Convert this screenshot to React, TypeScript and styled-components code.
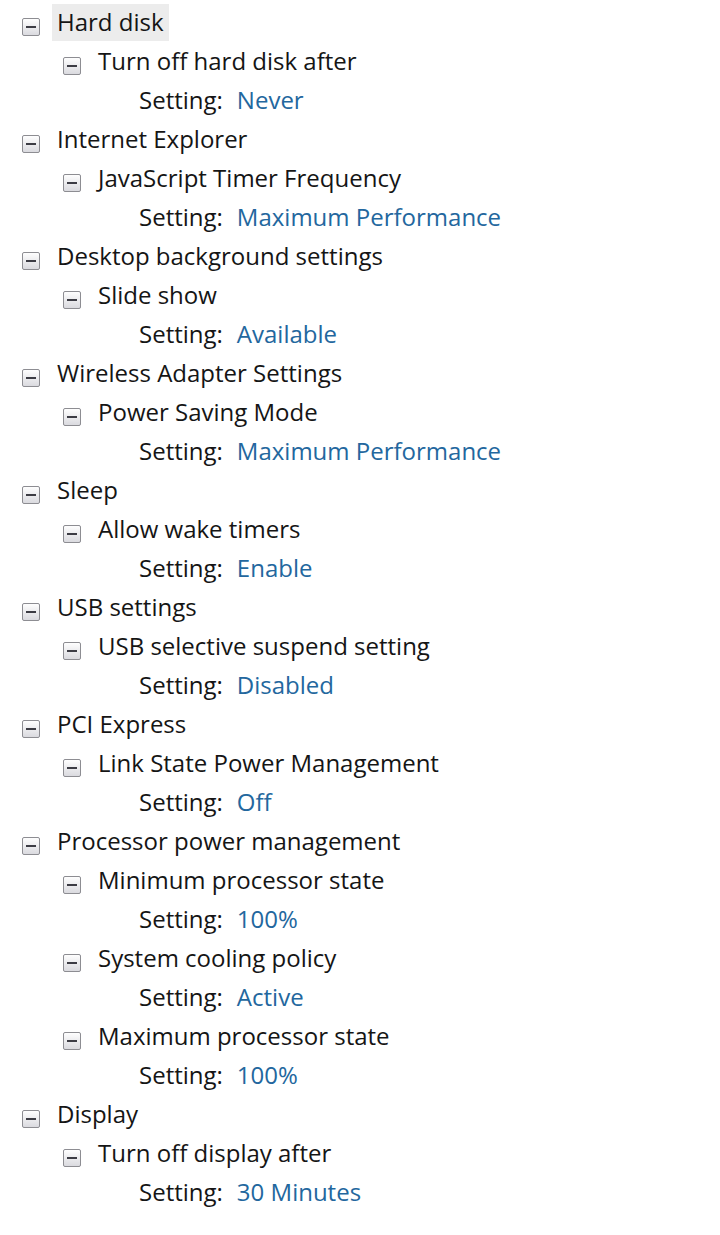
import React from "react";
import styled, { createGlobalStyle } from "styled-components";

const GlobalStyle = createGlobalStyle`
  html, body { margin: 0; padding: 0; background: #ffffff; }
  body { font-family: "Open Sans", "Noto Sans", "Liberation Sans", sans-serif; }
`;

type Setting = { name: string; value: string };
type Group = { name: string; settings: Setting[] };

const groups: Group[] = [
  { name: "Hard disk", settings: [{ name: "Turn off hard disk after", value: "Never" }] },
  { name: "Internet Explorer", settings: [{ name: "JavaScript Timer Frequency", value: "Maximum Performance" }] },
  { name: "Desktop background settings", settings: [{ name: "Slide show", value: "Available" }] },
  { name: "Wireless Adapter Settings", settings: [{ name: "Power Saving Mode", value: "Maximum Performance" }] },
  { name: "Sleep", settings: [{ name: "Allow wake timers", value: "Enable" }] },
  { name: "USB settings", settings: [{ name: "USB selective suspend setting", value: "Disabled" }] },
  { name: "PCI Express", settings: [{ name: "Link State Power Management", value: "Off" }] },
  {
    name: "Processor power management",
    settings: [
      { name: "Minimum processor state", value: "100%" },
      { name: "System cooling policy", value: "Active" },
      { name: "Maximum processor state", value: "100%" },
    ],
  },
  { name: "Display", settings: [{ name: "Turn off display after", value: "30 Minutes" }] },
];

const Tree = styled.div`
  padding-top: 2px;
  color: #151515;
  font-size: 24px;
`;

const Row = styled.div<{ $level: number }>`
  display: flex;
  align-items: center;
  height: 39px;
  padding-left: ${(p) => (p.$level === 2 ? 139 : 22 + p.$level * 41)}px;
  white-space: nowrap;
`;

const Toggle = styled.span`
  display: inline-flex;
  width: 18px;
  height: 18px;
  margin-top: 10px;
  flex: none;
`;

const Label = styled.span<{ $selected?: boolean }>`
  display: inline-flex;
  align-items: center;
  height: 37px;
  margin-top: 1px;
  margin-left: 12px;
  padding: 0 5px;
  background: ${(p) => (p.$selected ? "#ececec" : "transparent")};
  line-height: 1;
`;

const SettingLine = styled.span`
  display: inline-flex;
  align-items: center;
  line-height: 1;
`;

const Value = styled.span`
  color: #23679e;
  margin-left: 14px;
`;

function MinusBox() {
  return (
    <Toggle>
      <svg width="18" height="18" viewBox="0 0 18 18">
        <defs>
          <linearGradient id="tg" x1="0" y1="0" x2="0" y2="1">
            <stop offset="0" stopColor="#ffffff" />
            <stop offset="1" stopColor="#d9d9de" />
          </linearGradient>
        </defs>
        <rect x="0.5" y="0.5" width="17" height="17" rx="1.5" fill="url(#tg)" stroke="#8d8d92" />
        <rect x="4" y="8" width="10" height="2" fill="#3c3c44" />
      </svg>
    </Toggle>
  );
}

export default function App() {
  return (
    <>
      <GlobalStyle />
      <Tree>
        {groups.map((g, gi) => (
          <React.Fragment key={g.name}>
            <Row $level={0}>
              <MinusBox />
              <Label $selected={gi === 0}>{g.name}</Label>
            </Row>
            {g.settings.map((s) => (
              <React.Fragment key={s.name}>
                <Row $level={1}>
                  <MinusBox />
                  <Label>{s.name}</Label>
                </Row>
                <Row $level={2}>
                  <SettingLine>
                    Setting:<Value>{s.value}</Value>
                  </SettingLine>
                </Row>
              </React.Fragment>
            ))}
          </React.Fragment>
        ))}
      </Tree>
    </>
  );
}
